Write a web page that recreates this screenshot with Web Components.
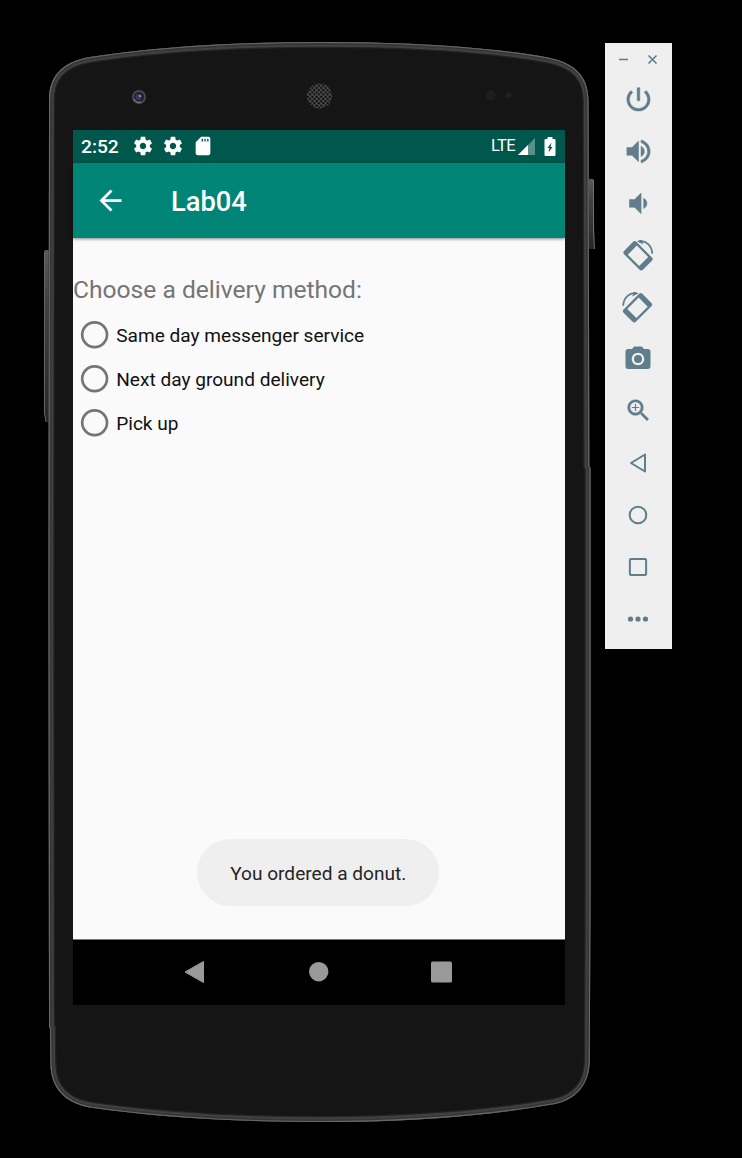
<!DOCTYPE html>
<html lang="en"><head><meta charset="utf-8"><title>Lab04</title>
<style>html,body{margin:0;background:#000}body{width:742px;height:1158px;overflow:hidden;font-family:Roboto,sans-serif}</style></head>
<body>
<emulator-window>
 <phone-frame>
  <status-bar></status-bar>
  <app-bar>Lab04</app-bar>
  <delivery-form>
   <span slot="heading">Choose a delivery method:</span>
   <radio-option>Same day messenger service</radio-option>
   <radio-option>Next day ground delivery</radio-option>
   <radio-option>Pick up</radio-option>
   <toast-message slot="toast">You ordered a donut.</toast-message>
  </delivery-form>
  <nav-bar></nav-bar>
 </phone-frame>
 <emulator-tools></emulator-tools>
</emulator-window>
<script>
const define=(name,html)=>customElements.define(name,class extends HTMLElement{
 constructor(){super();this.attachShadow({mode:'open'}).innerHTML=html}
});
const body='M49 100C49 78 60 62 90 57C160 46 240 42 320 42C410 42 490 47 548 57.5C576 63 588 77 588.5 100L589 300L589.300 466L590.500 468L590.500 900L589.800 1060C589.500 1084 577 1099 555 1104C482 1117 402 1122 320 1122C240 1122 162 1118 90 1107.500C64 1103 51 1087 50.500 1065L50 1028L49 1027L48.500 600Z';
define('emulator-window',`<style>:host{display:grid;grid-template-columns:605px 67px;align-items:start;height:1158px}</style><slot></slot>`);
define('phone-frame',`<style>
:host{display:grid;width:605px;height:1158px}
svg,.screen{grid-area:1/1}
.screen{display:flex;flex-direction:column;width:492px;height:875px;margin:130px 0 0 73px;background:#000;z-index:1}
</style>
<svg width="605" height="1158" fill="none">
 <defs>
 <linearGradient id="b" x2="0" y2="1"><stop stop-color="#5a5a5a"/><stop offset=".3" stop-color="#424242"/><stop offset="1" stop-color="#262626"/></linearGradient>
 <pattern id="m" width="4.400" height="4.400" patternUnits="userSpaceOnUse" patternTransform="translate(1 1)"><circle cx="1.100" cy="1.100" r="1.150" fill="#080808"/><circle cx="3.300" cy="3.300" r="1.150" fill="#080808"/></pattern>
 <clipPath id="c"><path d="${body}"/></clipPath></defs>
 <path d="M49 250h-4.500v163l1.500 9h3z" fill="url(#b)"/><path d="M44.500 252v161l1.500 9" stroke="#666"/>
 <path d="M588 179h5.500l1 70h-6z" fill="url(#b)"/><path d="M593.500 180v50l1 19" stroke="#707070"/>
 <path d="${body}" fill="#151515"/>
 <g clip-path="url(#c)"><path d="${body}" stroke="#242424" stroke-width="12"/><path d="${body}" stroke="#404040" stroke-width="9.500"/><path d="${body}" stroke="#363636" stroke-width="5.500"/><path d="${body}" stroke="#686868" stroke-width="2.200"/></g>
 <circle cx="139" cy="97" r="7" fill="#4b4b4b"/><circle cx="139" cy="97" r="5.200" fill="#23232b"/><circle cx="138.500" cy="97" r="3" fill="#3b356d"/><circle cx="140" cy="96" r="1" fill="#aaa"/><path d="M134 99a5.500 5.500 0 0 0 7 3" stroke="#888"/>
 <circle cx="319.500" cy="96" r="12.500" fill="#4e4e4e"/><circle cx="319.500" cy="96" r="12.500" fill="url(#m)"/>
 <circle cx="491" cy="95.500" r="5" fill="#1e1e1e"/><circle cx="508.500" cy="95.500" r="3" fill="#202020"/>
</svg><div class="screen"><slot></slot></div>`);
const gear='<svg width="22" height="22" viewBox="0 0 24 24"><path d="M19.43 12.98c.04-.32.07-.64.07-.98s-.03-.66-.07-.98l2.110-1.650c.19-.15.24-.42.12-.64l-2-3.460c-.12-.22-.39-.3-.61-.22l-2.490 1c-.52-.4-1.080-.73-1.690-.98l-.38-2.650C14.460 2.180 14.250 2 14 2h-4c-.25 0-.46.18-.49.42l-.38 2.650c-.61.25-1.170.59-1.690.98l-2.490-1c-.23-.09-.49 0-.61.22l-2 3.460c-.13.22-.07.49.12.64l2.110 1.650c-.04.32-.07.65-.07.98s.03.66.07.98l-2.110 1.650c-.19.15-.24.42-.12.64l2 3.460c.12.22.39.3.61.22l2.490-1c.52.4 1.080.73 1.690.98l.38 2.650c.03.24.24.42.49.42h4c.25 0 .46-.18.49-.42l.38-2.650c.61-.25 1.170-.59 1.690-.98l2.490 1c.23.09.49 0 .61-.22l2-3.460c.12-.22.07-.49-.12-.64l-2.110-1.650zM12 15.500c-1.930 0-3.500-1.570-3.500-3.500s1.570-3.500 3.500-3.500 3.500 1.570 3.500 3.500-1.570 3.500-3.500 3.500z"/></svg>';
define('status-bar',`<style>
:host{display:flex;height:32.500px;flex:none;align-items:center;background:#00574b;color:#fff;box-sizing:border-box;padding-left:8px}
svg{fill:#fff;flex:none;display:block}.time{font-weight:500;font-size:19.200px;line-height:32px;width:51px;padding-top:1px}
.icons{display:flex;gap:8px;align-items:center;flex:1;padding-left:.4px}.lte{font-size:16.500px;letter-spacing:-.6px;width:26.500px;line-height:32px}.sig{margin-right:9.500px}
</style><span class="time">2:52</span><div class="icons">${gear}${gear}<svg width="22" height="22" viewBox="0 0 24 24"><path d="M18 2h-8L4.020 8 4 20c0 1.100.9 2 2 2h12c1.100 0 2-.9 2-2V4c0-1.100-.9-2-2-2zm-6 5h-1.500V4H12v3zm3 0h-1.500V4H15v3zm3 0h-1.500V4H18v3z"/></svg></div><span class="lte">LTE</span>
<svg class="sig" width="17" height="17" viewBox="0 0 17 17"><path d="M0 17L17 0v17z" opacity=".35"/><path d="M0 17L10 7v10z"/></svg>
<svg width="12" height="19" viewBox="0 0 12 19" style="margin-right:9px"><path fill-rule="evenodd" d="M3.500 0h5v2H10.500q1 0 1 1v15q0 1-1 1H1.500q-1 0-1-1V3q0-1 1-1h2zM7.500 5.500L3.500 11h2l-1 4.500L8.500 10h-2z"/></svg>`);
define('app-bar',`<style>
:host{display:flex;height:75.500px;flex:none;align-items:center;background:#008577;color:#fff;font-size:27.300px;font-weight:500;box-shadow:0 1px 3px #0007;z-index:1}
svg{margin:0 44px 0 21px;width:33px;height:33px}span{line-height:36px;padding-top:3px}
</style><svg viewBox="0 0 24 24" fill="#fff"><path d="M20 11H7.830l5.590-5.590L12 4l-8 8 8 8 1.410-1.410L7.830 13H20v-2z"/></svg><span><slot></slot></span>`);
define('delivery-form',`<style>
:host{display:flex;flex-direction:column;flex:1;background:#fafafa;color:#757575;box-sizing:border-box;padding-top:36px}
.h{font-size:24.600px;line-height:32px;height:39px}.t{margin-top:auto;padding:0 1.500px 33px 0;display:flex;justify-content:center}
</style><div class="h"><slot name="heading"></slot></div><slot></slot><div class="t"><slot name="toast"></slot></div>`);
define('radio-option',`<style>
:host{display:flex;align-items:center;height:43.900px;color:#111;font-size:19.100px;line-height:26px;padding-left:7.500px}
svg{display:block;overflow:visible;margin-right:8.200px}span{padding-top:2px}
</style><svg width="27.500" height="27.500" viewBox="0 0 27.500 27.500"><circle cx="13.600" cy="13.750" r="12.400" fill="none" stroke="#757575" stroke-width="2.700"/></svg><span><slot></slot></span>`);
define('toast-message',`<style>:host{display:block;box-sizing:border-box;width:242px;height:67px;border-radius:34px;background:#efefef;color:#252525;font-size:19.100px;line-height:69px;text-align:center}</style><slot></slot>`);
define('nav-bar',`<style>
:host{display:flex;height:66px;flex:none;box-sizing:border-box;background:#000;padding:0 62.500px 1.500px 61.500px;align-items:center;border-top:1px solid #777}
div{flex:1;display:grid;place-items:center}svg{display:block}
</style><div><svg width="24" height="24"><path d="M1 12L19.500 1.500v21z" fill="#999" stroke="#999" stroke-linejoin="round"/></svg></div><div><svg width="24" height="24"><circle cx="11.700" cy="11.700" r="9.700" fill="#999"/></svg></div><div><svg width="24" height="24"><rect x="2" y="1.500" width="21" height="21" rx="1.500" fill="#999"/></svg></div>`);
const rot='<g transform="translate(0 .8) rotate(45 16 16)"><path fill-rule="evenodd" d="M5 7.300h22q2.300 0 2.300 2.300v12.800q0 2.300-2.300 2.300H5q-2.300 0-2.300-2.300V9.600q0-2.300 2.300-2.300zM8 9.600v12.800h16V9.600z"/></g><path d="M17 2.300C24 1 30 7 30.300 14.800" fill="none" stroke="#607d8b" stroke-width="1.700"/><path d="M14.800 2.300l4.700-1.500 1.800 4.700z"/>';
const tools=[
[31,24,'<path d="M13 3h-2v10h2V3zm4.830 2.170l-1.420 1.420C17.990 7.860 19 9.810 19 12c0 3.870-3.130 7-7 7s-7-3.130-7-7c0-2.190 1.010-4.140 2.580-5.420L6.170 5.170C4.230 6.820 3 9.260 3 12c0 4.970 4.030 9 9 9s9-4.030 9-9c0-2.740-1.230-5.180-3.170-6.830z" stroke="#607d8b" stroke-width=".4"/>'],
[31,24,'<path d="M3 9v6h4l5 5V4L7 9H3zm13.500 3c0-1.770-1.020-3.290-2.500-4.030v8.050c1.480-.73 2.500-2.250 2.500-4.020zM14 3.230v2.060c2.890.86 5 3.540 5 6.710s-2.110 5.850-5 6.710v2.060c4.010-.91 7-4.490 7-8.770s-2.990-7.860-7-8.770z" stroke="#607d8b" stroke-width=".4"/>'],
[31,24,'<path d="M18.500 12c0-1.770-1.020-3.290-2.500-4.030v8.050c1.480-.73 2.500-2.250 2.500-4.020zM5 9v6h4l5 5V4L9 9H5z" stroke="#607d8b" stroke-width=".4"/>'],
[32,32,rot],[32,32,'<g transform="matrix(-1 0 0 1 31.500 0)">'+rot+'</g>'],
[30,24,'<circle cx="12" cy="12" r="3.200"/><path d="M9 2L7.170 4H4c-1.100 0-2 .9-2 2v12c0 1.100.9 2 2 2h16c1.100 0 2-.9 2-2V6c0-1.100-.9-2-2-2h-3.170L15 2H9zm3 15c-2.760 0-5-2.240-5-5s2.240-5 5-5 5 2.240 5 5-2.240 5-5 5z"/>'],
[29,24,'<path d="M15.500 14h-.79l-.28-.27C15.410 12.590 16 11.110 16 9.500 16 5.910 13.090 3 9.500 3S3 5.910 3 9.500 5.910 16 9.500 16c1.610 0 3.090-.59 4.230-1.570l.27.28v.79l5 4.990L20.490 19l-4.990-5zm-6 0C7.010 14 5 11.990 5 9.500S7.010 5 9.500 5 14 7.010 14 9.500 11.990 14 9.500 14z" stroke="#607d8b" stroke-width=".3"/><path d="M12.500 10H10v2.500H9V10H6.500V9H9V6.500h1V9h2.500v1z"/>'],
[32,32,'<path d="M9 16L23 7.500v17z" fill="none" stroke="#607d8b" stroke-width="2" stroke-linejoin="round"/>'],
[32,32,'<circle cx="16" cy="16" r="8.300" fill="none" stroke="#607d8b" stroke-width="2"/>'],
[32,32,'<rect x="7.900" y="7.900" width="16.200" height="16.200" rx="1" fill="none" stroke="#607d8b" stroke-width="2"/>'],
[32,32,'<circle cx="8.500" cy="16" r="2.600"/><circle cx="16" cy="16" r="2.600"/><circle cx="23.500" cy="16" r="2.600"/>']];
define('emulator-tools',`<style>
:host{display:flex;flex-direction:column;margin-top:43px;width:67px;height:606px;background:#efefef}
.top{height:30px;flex:none}.tool{height:52px;flex:none;display:grid;place-items:center;box-sizing:border-box;padding-right:1px}.tool:nth-of-type(-n+3){padding:0 1px 0 0}.tool:nth-of-type(-n+3) svg{transform:translateY(-.1px)}.tool:nth-of-type(7){padding-bottom:1px}svg{display:block;fill:#607d8b}
</style><svg class="top" width="67" height="30"><path d="M14 16.500h9M43.500 12.500l8 8M51.500 12.500l-8 8" fill="none" stroke="#607d8b" stroke-width="1.600"/></svg>${tools.map(([s,v,p])=>`<div class="tool"><svg width="${s}" height="${s}" viewBox="0 0 ${v} ${v}">${p}</svg></div>`).join('')}`);
</script></body></html>
